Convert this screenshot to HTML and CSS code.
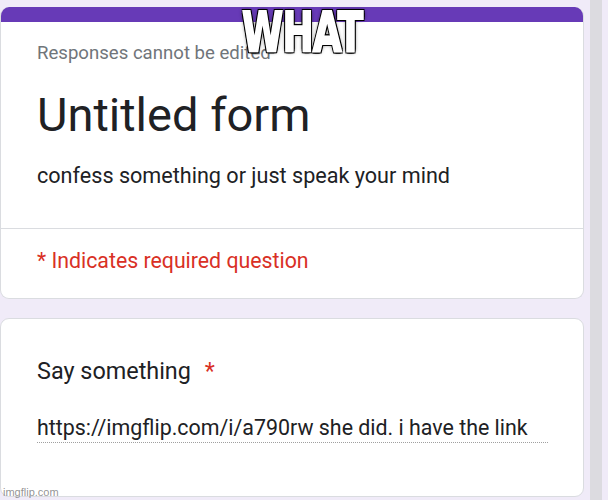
FILE: index.html
```html
<!DOCTYPE html>
<html>
<head>
<meta charset="utf-8">
<link rel="stylesheet" href="styles.css">
</head>
<body>
<div class="page">
  <main class="column">
    <section class="card head-card">
      <div class="accent"></div>
      <div class="head">
        <p class="note">Responses cannot be edited</p>
        <h1 class="title">Untitled form</h1>
        <p class="desc">confess something or just speak your mind</p>
      </div>
      <div class="required">* Indicates required question</div>
    </section>
    <section class="card question">
      <div class="q-label">Say something <span class="star">*</span></div>
      <div class="answer">https://imgflip.com/i/a790rw she did. i have the link</div>
    </section>
  </main>
  <div class="rail"></div>
</div>
<div class="meme">WHAT</div>
<div class="watermark">imgflip.com</div>
</body>
</html>
```

FILE: styles.css
```css
html, body {
  margin: 0;
  padding: 0;
  background: #f0ebf8;
  font-family: Roboto, "Noto Sans", sans-serif;
  overflow: hidden;
}
.page {
  display: flex;
  gap: 6px;
  padding-top: 7px;
  height: 500px;
  box-sizing: border-box;
}
.column {
  width: 584px;
  display: flex;
  flex-direction: column;
  gap: 19px;
}
.rail {
  width: 12px;
  background: #dcdbe0;
  margin-top: -7px;
}
.card {
  background: #fff;
  border: 1px solid #dadce0;
  border-radius: 9px;
  box-sizing: border-box;
  overflow: hidden;
}
.head-card {
  height: 292px;
  border-top: none;
}
.accent {
  height: 15px;
  background: #673ab7;
}
.head {
  box-sizing: border-box;
  padding: 20px 36px 0;
  height: 207px;
  border-bottom: 1px solid #dadce0;
}
.note {
  margin: 0;
  font-size: 18.6px;
  line-height: 22px;
  color: #70757a;
}
.title {
  margin: 24px 0 0;
  font-weight: 400;
  font-size: 47px;
  line-height: 54px;
  color: #202124;
}
.desc {
  margin: 21px 0 0;
  font-size: 21.6px;
  line-height: 26px;
  color: #202124;
}
.required {
  padding: 20px 36px 0;
  font-size: 21.3px;
  line-height: 24px;
  color: #d93025;
}
.question {
  height: 179px;
  padding: 38px 36px 0;
}
.q-label {
  font-size: 23.4px;
  line-height: 28px;
  color: #202124;
}
.star {
  color: #d93025;
  margin-left: 8px;
}
.answer {
  margin-top: 30px;
  width: 511px;
  font-size: 21.4px;
  line-height: 26px;
  color: #202124;
  border-bottom: 1px dotted #a0a0a0;
  padding-bottom: 1px;
  white-space: nowrap;
}
.meme {
  position: absolute;
  top: 2px;
  left: 242px;
  font-family: "Liberation Sans Narrow", "DejaVu Sans Condensed", sans-serif;
  font-weight: 700;
  font-size: 56px;
  line-height: 60px;
  color: #fff;
  letter-spacing: -1px;
  transform: scaleX(0.74);
  transform-origin: left top;
  white-space: nowrap;
  -webkit-text-stroke: 2px #fff;
  text-shadow: -2px -2px 0 #000, 2px -2px 0 #000, -2px 2px 0 #000, 2px 2px 0 #000, 0 -2px 0 #000, 0 2px 0 #000, -2px 0 0 #000, 2px 0 0 #000, 0 0 5px #000;
}
.watermark {
  position: absolute;
  left: 3px;
  bottom: 2px;
  font-family: "Liberation Sans", sans-serif;
  font-size: 11px;
  color: rgba(120, 120, 120, 0.8);
}
```
